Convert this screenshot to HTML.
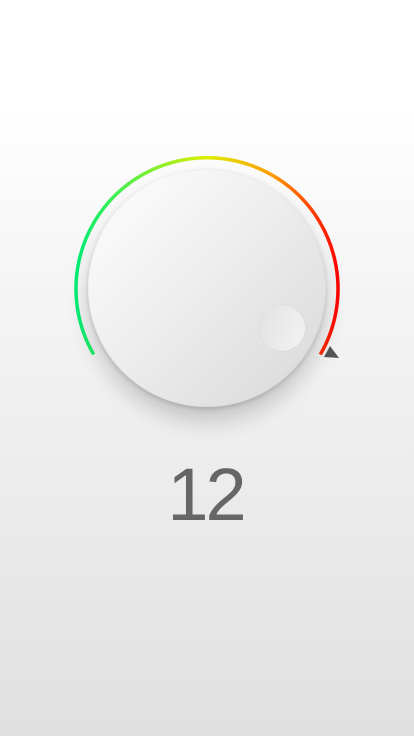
<!DOCTYPE html>
<html><head><style>
html,body{margin:0;padding:0;}
body{width:414px;height:736px;overflow:hidden;position:relative;
background:linear-gradient(180deg,#ffffff 0px,#ffffff 110px,#f6f6f6 260px,#ececec 480px,#e0e0e0 736px);
font-family:"Liberation Sans",sans-serif;}
.knob{position:absolute;left:88px;top:169px;width:238px;height:238px;border-radius:50%;
background:linear-gradient(135deg,#ffffff 0%,#f2f2f2 35%,#d8d8d8 100%);
box-shadow:0 14px 22px rgba(0,0,0,0.18),0 2px 4px rgba(0,0,0,0.15),inset 0 0 0 1px rgba(0,0,0,0.03);}
.dot{position:absolute;left:259px;top:305px;width:46px;height:46px;border-radius:50%;
background:linear-gradient(110deg,#e2e2e2,#f3f3f3);box-shadow:0 0 1px rgba(0,0,0,0.15);}
.num{position:absolute;left:0;width:414px;top:452px;text-align:center;font-size:74px;color:#666;font-weight:normal;letter-spacing:-3px;text-indent:-3px;}
svg{position:absolute;left:0;top:0;}
</style></head><body>
<svg width="414" height="736">
<defs><linearGradient id="g" x1="75" y1="0" x2="340" y2="0" gradientUnits="userSpaceOnUse">
<stop offset="0" stop-color="#00ee77"/><stop offset="0.5" stop-color="#ddee00"/><stop offset="0.75" stop-color="#ff9900"/><stop offset="1" stop-color="#ff0000"/></linearGradient></defs>
<path d="M93.7 354.5 A131 131 0 1 1 320.3 354.5" fill="none" stroke="url(#g)" stroke-width="3.5"/>
<polygon points="324,357 330,346 339,358" fill="#555"/>
</svg>
<div class="knob"></div>
<div class="dot"></div>
<div class="num">12</div>
</body></html>
